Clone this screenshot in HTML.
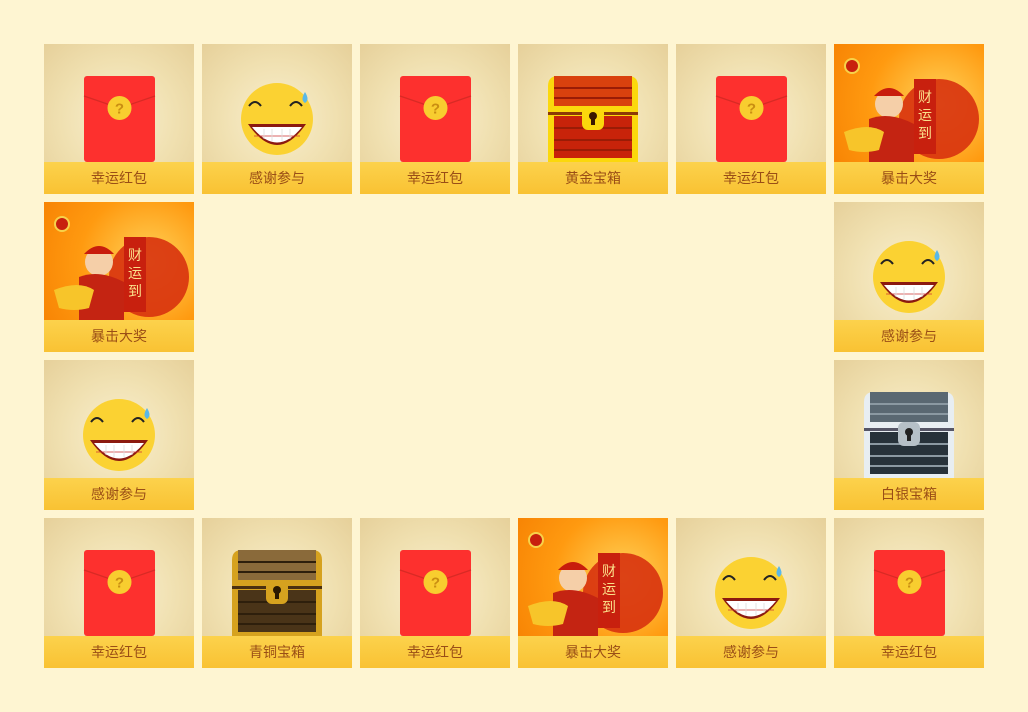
<!DOCTYPE html>
<html><head><meta charset="utf-8"><style>
body{margin:0;width:1028px;height:712px;background:#fef5d2;position:relative;overflow:hidden;font-family:"Liberation Sans","Noto Sans CJK SC",sans-serif}
.c{position:absolute;width:150px;height:150px;background:radial-gradient(ellipse at 50% 50%,#f9efcf 0%,#f0e0b0 55%,#e6d09a 100%);overflow:hidden}
.l{position:absolute;left:0;bottom:0;width:150px;height:32px;line-height:32px;text-align:center;font-size:14px;color:#9a4e16;background:linear-gradient(#fcd24c,#f9c233)}
.c svg{position:absolute;left:0;top:0}
.bg{background:radial-gradient(circle at 70% 40%,#ffd35a 0%,#ff9a10 50%,#f57d00 100%)}
</style></head><body>
<svg width="0" height="0" style="position:absolute">
<defs>
<g id="env"><rect x="40" y="32" width="71" height="86" rx="3" fill="#fd302e"/><path d="M40 52 L75 64 M111 52 L76 64" stroke="#d82a25" stroke-width="1.2"/><circle cx="75.5" cy="64" r="12" fill="#f8cd2f"/><text x="75.5" y="69.5" text-anchor="middle" font-size="15" font-weight="bold" fill="#c98e12" font-family="Liberation Sans">?</text></g>
<g id="smile"><circle cx="75" cy="75" r="36" fill="#fbd232"/><path d="M46 80 Q75 122 104 80 Z" fill="#8b1a10"/><path d="M50 83 Q75 114 100 83 Z" fill="#fff"/><path d="M52 92 H98" stroke="#c33" stroke-width="0.8"/><path d="M62 85V95M70 85V97M80 85V97M88 85V95" stroke="#ddd" stroke-width="0.8"/><path d="M47 62 q6-8 12 0 M88 62 q6-8 12 0" stroke="#222" stroke-width="2" fill="none"/><path d="M103 48 q-5 8 0 11 q5-3 0-11z" fill="#59b8e8"/></g>
<g id="gold"><path d="M30 118V42q0-10 10-10h70q10 0 10 10v76z" fill="#fbd80c"/><rect x="36" y="32" width="78" height="30" fill="#d9410e"/><rect x="36" y="72" width="78" height="42" fill="#c8230a"/><path d="M36 44H114M36 54H114M36 84H114M36 96H114M36 106H114" stroke="#9a1c06" stroke-width="2"/><rect x="30" y="68" width="90" height="3" fill="#8c3a06"/><rect x="64" y="62" width="22" height="24" rx="6" fill="#fbd80c"/><circle cx="75" cy="72" r="4" fill="#3a1800"/><rect x="73" y="73" width="4" height="8" fill="#3a1800"/></g>
<g id="silver"><path d="M30 118V42q0-10 10-10h70q10 0 10 10v76z" fill="#e8eef2"/><rect x="36" y="32" width="78" height="30" fill="#5a6872"/><rect x="36" y="72" width="78" height="42" fill="#27323a"/><path d="M36 44H114M36 54H114M36 84H114M36 96H114M36 106H114" stroke="#8b99a2" stroke-width="2"/><rect x="30" y="68" width="90" height="3" fill="#556"/><rect x="64" y="62" width="22" height="24" rx="6" fill="#b6c0c7"/><circle cx="75" cy="72" r="4" fill="#222"/><rect x="73" y="73" width="4" height="8" fill="#222"/></g>
<g id="bronze"><path d="M30 118V42q0-10 10-10h70q10 0 10 10v76z" fill="#d6a21f"/><rect x="36" y="32" width="78" height="30" fill="#8a6a3a"/><rect x="36" y="72" width="78" height="42" fill="#4a3418"/><path d="M36 44H114M36 54H114M36 84H114M36 96H114M36 106H114" stroke="#2e1f0c" stroke-width="2"/><rect x="30" y="68" width="90" height="3" fill="#4a3010"/><rect x="64" y="62" width="22" height="24" rx="6" fill="#d6a21f"/><circle cx="75" cy="72" r="4" fill="#2a1800"/><rect x="73" y="73" width="4" height="8" fill="#2a1800"/></g>
<g id="god"><circle cx="105" cy="75" r="40" fill="#d8320e" opacity=".9"/><rect x="80" y="35" width="22" height="75" fill="#c8200e"/><text x="91" y="58" text-anchor="middle" font-size="14" fill="#fbe08a">财</text><text x="91" y="76" text-anchor="middle" font-size="14" fill="#fbe08a">运</text><text x="91" y="94" text-anchor="middle" font-size="14" fill="#fbe08a">到</text><circle cx="55" cy="60" r="14" fill="#f5cfa8"/><path d="M40 52 q15-16 30 0z" fill="#c81c0c"/><path d="M35 75 q20-8 45 5 v38 h-45z" fill="#c42412"/><path d="M10 88 q25-10 40 0 l-5 18 q-15 4-30 0z" fill="#f7c52a"/><circle cx="18" cy="22" r="7" fill="#c8200e" stroke="#f7d24a" stroke-width="2"/></g>
</defs></svg>

<div class="c" style="left:44px;top:44px"><svg width="150" height="150"><use href="#env"/></svg><div class="l">幸运红包</div></div>
<div class="c" style="left:202px;top:44px"><svg width="150" height="150"><use href="#smile"/></svg><div class="l">感谢参与</div></div>
<div class="c" style="left:360px;top:44px"><svg width="150" height="150"><use href="#env"/></svg><div class="l">幸运红包</div></div>
<div class="c" style="left:518px;top:44px"><svg width="150" height="150"><use href="#gold"/></svg><div class="l">黄金宝箱</div></div>
<div class="c" style="left:676px;top:44px"><svg width="150" height="150"><use href="#env"/></svg><div class="l">幸运红包</div></div>
<div class="c bg" style="left:834px;top:44px"><svg width="150" height="150"><use href="#god"/></svg><div class="l">暴击大奖</div></div>

<div class="c bg" style="left:44px;top:202px"><svg width="150" height="150"><use href="#god"/></svg><div class="l">暴击大奖</div></div>
<div class="c" style="left:834px;top:202px"><svg width="150" height="150"><use href="#smile"/></svg><div class="l">感谢参与</div></div>

<div class="c" style="left:44px;top:360px"><svg width="150" height="150"><use href="#smile"/></svg><div class="l">感谢参与</div></div>
<div class="c" style="left:834px;top:360px"><svg width="150" height="150"><use href="#silver"/></svg><div class="l">白银宝箱</div></div>

<div class="c" style="left:44px;top:518px"><svg width="150" height="150"><use href="#env"/></svg><div class="l">幸运红包</div></div>
<div class="c" style="left:202px;top:518px"><svg width="150" height="150"><use href="#bronze"/></svg><div class="l">青铜宝箱</div></div>
<div class="c" style="left:360px;top:518px"><svg width="150" height="150"><use href="#env"/></svg><div class="l">幸运红包</div></div>
<div class="c bg" style="left:518px;top:518px"><svg width="150" height="150"><use href="#god"/></svg><div class="l">暴击大奖</div></div>
<div class="c" style="left:676px;top:518px"><svg width="150" height="150"><use href="#smile"/></svg><div class="l">感谢参与</div></div>
<div class="c" style="left:834px;top:518px"><svg width="150" height="150"><use href="#env"/></svg><div class="l">幸运红包</div></div>
</body></html>
